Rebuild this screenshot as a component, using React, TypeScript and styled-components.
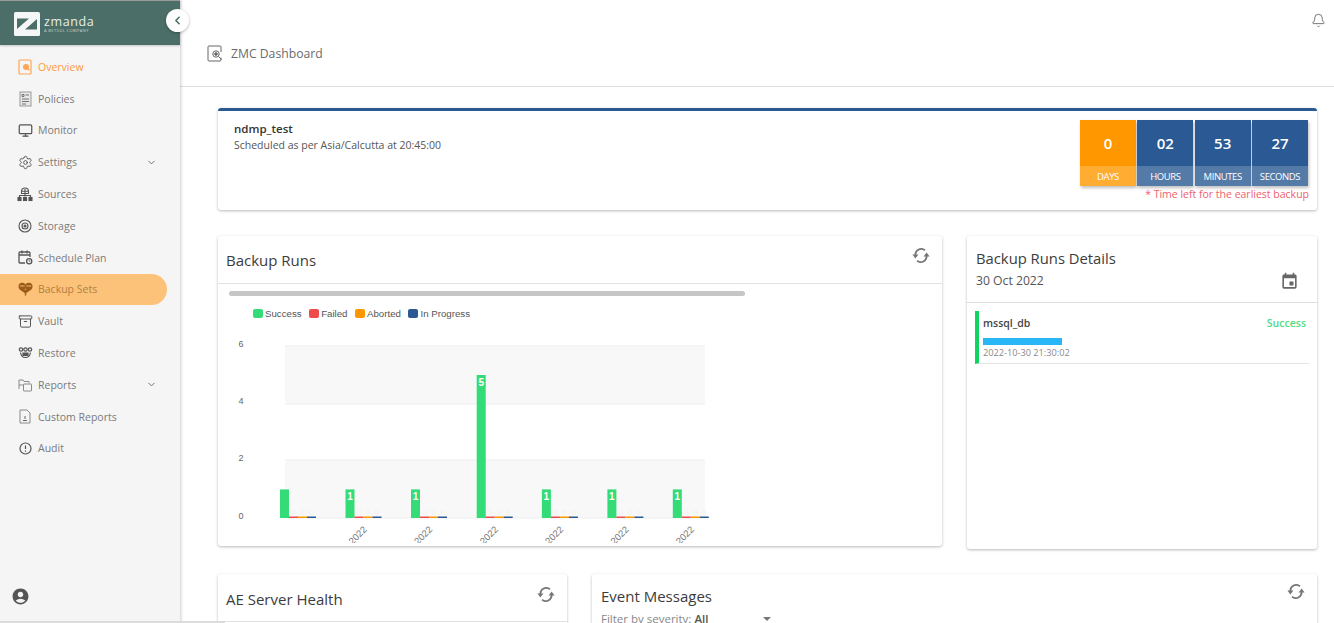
import type { ReactNode } from "react";
import styled, { createGlobalStyle } from "styled-components";
import { Archive, Bell, ChevronDown, ChevronLeft, Monitor, Settings } from "lucide-react";
import { MdAccountCircle, MdEvent } from "react-icons/md";

const palette = {
  orange: "#ff9800",
  blue: "#2a5993",
  green: "#33dc77",
  red: "#ef4b4b",
  sidebar: "#f5f5f5",
  teal: "#4b6f68",
};

const GlobalStyle = createGlobalStyle`
  html, body {
    margin: 0;
    height: 100%;
    overflow: hidden;
    background: #fff;
    font-family: "Open Sans", "Noto Sans", "Liberation Sans", sans-serif;
  }
  #root { height: 100%; }
  * { box-sizing: border-box; }
`;

function OverviewIcon() {
  return (
    <svg width="14" height="16" viewBox="0 0 14 16" fill="none" stroke="currentColor" strokeWidth="1.2" opacity="0.85">
      <rect x="1" y="1" width="12" height="14" rx="1" />
      <circle cx="8" cy="8" r="2.4" fill="currentColor" />
      <path d="M9.5 9.5l2 2" />
    </svg>
  );
}

function PoliciesIcon() {
  return (
    <svg width="13" height="16" viewBox="0 0 13 16" fill="#e8e8e8" stroke="#9a9a9a" strokeWidth="1">
      <rect x="1" y="1" width="11" height="14" />
      <path d="M3 3.5h2v2H3zM6.5 4h3.5M3 8h7M3 10.5h7M3 13h4" fill="none" stroke="#666" strokeWidth="0.9" />
    </svg>
  );
}

function SourcesIcon() {
  return (
    <svg width="16" height="16" viewBox="0 0 16 16" fill="none" stroke="currentColor" strokeWidth="1.1">
      <path d="M4.5 5.5a3.5 3.5 0 0 1 7 0v2h-7z" />
      <path d="M8 7.5v3M2.5 11V9.5h11V11M8 3v4.5M4.5 5.2h7" />
      <rect x="1" y="11.5" width="3" height="3" fill="currentColor" />
      <rect x="6.5" y="11.5" width="3" height="3" fill="currentColor" />
      <rect x="12" y="11.5" width="3" height="3" fill="currentColor" />
    </svg>
  );
}

function StorageIcon() {
  return (
    <svg width="14" height="14" viewBox="0 0 14 14" fill="none" stroke="currentColor" strokeWidth="1.1">
      <circle cx="7" cy="7" r="6" />
      <circle cx="7" cy="7" r="3" />
      <circle cx="7" cy="7" r="1" fill="currentColor" />
    </svg>
  );
}

function ScheduleIcon() {
  return (
    <svg width="15" height="15" viewBox="0 0 15 15" fill="none" stroke="currentColor" strokeWidth="1.3">
      <path d="M7 13H2a1 1 0 0 1-1-1V3a1 1 0 0 1 1-1h9a1 1 0 0 1 1 1v4" />
      <path d="M1 5h11M4 .5v3M9 .5v3" />
      <circle cx="11.2" cy="11.2" r="2.6" />
      <path d="M11.2 9.8v1.5h1.2" strokeWidth="0.8" />
    </svg>
  );
}

function BackupSetsIcon() {
  return (
    <svg width="15" height="14" viewBox="0 0 15 14" fill="currentColor">
      <circle cx="4.2" cy="4.5" r="3.7" />
      <circle cx="10.8" cy="4.5" r="3.7" />
      <path d="M1.5 7.5L7.5 11.5L13.5 7.5z" />
      <rect x="6.8" y="10" width="1.4" height="3.5" />
      <path d="M1.8 4h4.8M8.4 4h4.8" stroke="#fcc27a" strokeWidth="0.9" fill="none" />
    </svg>
  );
}

function RestoreIcon() {
  return (
    <svg width="15" height="12" viewBox="0 0 15 12" fill="none" stroke="currentColor" strokeWidth="1.2">
      <circle cx="3" cy="2.5" r="1.7" />
      <circle cx="7.5" cy="2.5" r="1.7" />
      <circle cx="12" cy="2.5" r="1.7" />
      <path d="M2.5 5.5c.5 3 2.5 5 5 5s4.5-2 5-5" />
      <path d="M5 6h5v2.5H5z" fill="currentColor" />
    </svg>
  );
}

function ReportsIcon() {
  return (
    <svg width="15" height="14" viewBox="0 0 15 14" fill="none" stroke="#8a8a8a" strokeWidth="1">
      <path d="M1 11V2h4l1 1.5h5V5" />
      <rect x="5.5" y="6" width="8" height="7" rx="0.5" />
      <path d="M1 7h4.5" />
    </svg>
  );
}

function CustomReportsIcon() {
  return (
    <svg width="12" height="15" viewBox="0 0 12 15" fill="none" stroke="#8a8a8a" strokeWidth="1">
      <path d="M1 1h7l3 3v10H1z" />
      <path d="M6 7v3M4 11.5h4" stroke="#666" />
    </svg>
  );
}

function AuditIcon() {
  return (
    <svg width="13" height="13" viewBox="0 0 13 13" fill="none" stroke="currentColor" strokeWidth="1.2">
      <circle cx="6.5" cy="6.5" r="5.5" />
      <path d="M6.5 3.5v3.5M6.5 8.5v1.2" />
    </svg>
  );
}

function DashboardIcon() {
  return (
    <svg width="16" height="17" viewBox="0 0 16 17" fill="none" stroke="#666" strokeWidth="1">
      <path d="M14 12.5V15a1 1 0 0 1-1 1H2a1 1 0 0 1-1-1V2a1 1 0 0 1 1-1h11a1 1 0 0 1 1 1v5" />
      <circle cx="9" cy="9" r="3.2" />
      <circle cx="9" cy="9" r="1.3" fill="#666" />
      <path d="M11.5 11.5l3 3" />
    </svg>
  );
}

function RefreshIcon() {
  return (
    <svg width="18" height="15" viewBox="0 0 18 15" fill="none" stroke="#777" strokeWidth="1.8">
      <path d="M13 2.4A5.8 5.8 0 0 0 3.4 7" />
      <path d="M5 12.6A5.8 5.8 0 0 0 14.6 8" />
      <path d="M0.4 6.6h6L3.4 10.4zM11.6 8.4h6L14.6 4.6z" fill="#777" stroke="none" />
    </svg>
  );
}

type NavEntry = { label: string; icon: ReactNode; tone?: "active" | "selected"; expandable?: boolean };

const navEntries: NavEntry[] = [
  { label: "Overview", icon: <OverviewIcon />, tone: "active" },
  { label: "Policies", icon: <PoliciesIcon /> },
  { label: "Monitor", icon: <Monitor size={15} strokeWidth={2} /> },
  { label: "Settings", icon: <Settings size={15} strokeWidth={1.5} />, expandable: true },
  { label: "Sources", icon: <SourcesIcon /> },
  { label: "Storage", icon: <StorageIcon /> },
  { label: "Schedule Plan", icon: <ScheduleIcon /> },
  { label: "Backup Sets", icon: <BackupSetsIcon />, tone: "selected" },
  { label: "Vault", icon: <Archive size={15} strokeWidth={1.6} /> },
  { label: "Restore", icon: <RestoreIcon /> },
  { label: "Reports", icon: <ReportsIcon />, expandable: true },
  { label: "Custom Reports", icon: <CustomReportsIcon /> },
  { label: "Audit", icon: <AuditIcon /> },
];

const countdown = [
  { value: "0", unit: "DAYS", color: palette.orange },
  { value: "02", unit: "HOURS", color: palette.blue },
  { value: "53", unit: "MINUTES", color: palette.blue },
  { value: "27", unit: "SECONDS", color: palette.blue },
];

const legend = [
  { label: "Success", color: palette.green },
  { label: "Failed", color: palette.red },
  { label: "Aborted", color: palette.orange },
  { label: "In Progress", color: palette.blue },
];

const runs = [
  { x: 280, count: 1, showLabels: false },
  { x: 345.5, count: 1, showLabels: true },
  { x: 411, count: 1, showLabels: true },
  { x: 476.7, count: 5, showLabels: true },
  { x: 541.9, count: 1, showLabels: true },
  { x: 607.4, count: 1, showLabels: true },
  { x: 672.8, count: 1, showLabels: true },
];

function RunsChart() {
  const base = 517;
  const unit = 28.6;
  return (
    <ChartSvg viewBox="218 325 724 217">
      <rect x="285" y="345" width="420" height="58" fill="#f8f8f8" />
      <rect x="285" y="459" width="420" height="58" fill="#f8f8f8" />
      {[345, 403, 459, 517].map((y) => (
        <line key={y} x1="285" x2="705" y1={y} y2={y} stroke="#efefef" />
      ))}
      {[
        ["6", 346],
        ["4", 403],
        ["2", 460],
        ["0", 518],
      ].map(([t, y]) => (
        <AxisText key={t} x="241" y={y} textAnchor="middle">
          {t}
        </AxisText>
      ))}
      {runs.map((run) => (
        <g key={run.x}>
          <rect x={run.x} y={base - run.count * unit} width="9" height={run.count * unit} fill={palette.green} />
          <rect x={run.x + 9} y={base - 1.5} width="9" height="1.5" fill={palette.red} />
          <rect x={run.x + 18} y={base - 1.5} width="9" height="1.5" fill={palette.orange} />
          <rect x={run.x + 27} y={base - 1.5} width="9" height="1.5" fill={palette.blue} />
          {[13.5, 22.5, 31.5].map((dx) => (
            <ZeroText key={dx} x={run.x + dx} y={base - 3} textAnchor="middle">
              0
            </ZeroText>
          ))}
          {run.showLabels && (
            <BarText x={run.x + 4.5} y={base - run.count * unit + 11} textAnchor="middle">
              {run.count}
            </BarText>
          )}
          {run.showLabels && (
            <DateText x={run.x + 22} y={529} textAnchor="end" transform={`rotate(-45 ${run.x + 22} 529)`}>
              30-Oct-2022
            </DateText>
          )}
        </g>
      ))}
    </ChartSvg>
  );
}

export default function App() {
  return (
    <Page>
      <GlobalStyle />
      <Sidebar>
        <Brand>
          <BrandMark viewBox="0 0 26 24">
            <rect width="26" height="24" rx="1.5" fill="#f4f7f6" />
            <path d="M3 6.500h12L3 17zM23 7v10.500H11z" fill={palette.teal} />
          </BrandMark>
          <BrandText>
            <BrandName>zmanda</BrandName>
            <BrandTag>A BETSOL COMPANY</BrandTag>
          </BrandText>
        </Brand>
        <CollapseButton>
          <ChevronLeft size={13} strokeWidth={3} />
        </CollapseButton>
        <Nav>
          {navEntries.map((entry) => (
            <NavItem key={entry.label} $tone={entry.tone}>
              <NavIcon>{entry.icon}</NavIcon>
              <span>{entry.label}</span>
              {entry.expandable && (
                <NavCaret>
                  <ChevronDown size={11} strokeWidth={2} />
                </NavCaret>
              )}
            </NavItem>
          ))}
        </Nav>
        <UserSlot>
          <MdAccountCircle size={19} />
        </UserSlot>
      </Sidebar>
      <Main>
        <TopBar>
          <BellSlot>
            <Bell size={15} strokeWidth={1.4} />
          </BellSlot>
          <PageTitle>
            <DashboardIcon />
            <span>ZMC Dashboard</span>
          </PageTitle>
        </TopBar>
        <Content>
          <NextBackupCard>
            <div>
              <PolicyName>ndmp_test</PolicyName>
              <PolicySchedule>Scheduled as per Asia/Calcutta at 20:45:00</PolicySchedule>
            </div>
            <CountdownColumn>
              <CountdownRow>
                {countdown.map((c) => (
                  <CountdownBox key={c.unit} $color={c.color}>
                    <CountdownValue>{c.value}</CountdownValue>
                    <CountdownUnit>{c.unit}</CountdownUnit>
                  </CountdownBox>
                ))}
              </CountdownRow>
              <CountdownNote>* Time left for the earliest backup</CountdownNote>
            </CountdownColumn>
          </NextBackupCard>

          <ChartRow>
            <RunsCard>
              <RunsHeader>
                <CardTitle>Backup Runs</CardTitle>
                <RefreshSlot>
                  <RefreshIcon />
                </RefreshSlot>
              </RunsHeader>
              <ScrollThumb />
              <Legend>
                {legend.map((item) => (
                  <LegendItem key={item.label}>
                    <LegendSwatch $color={item.color} />
                    {item.label}
                  </LegendItem>
                ))}
              </Legend>
              <RunsChart />
            </RunsCard>
            <DetailsCard>
              <DetailsHeader>
                <DetailsTitle>Backup Runs Details</DetailsTitle>
                <DateRow>
                  <span>30 Oct 2022</span>
                  <MdEvent size={19} color="#666" />
                </DateRow>
              </DetailsHeader>
              <RunItem>
                <RunTop>
                  <RunName>mssql_db</RunName>
                  <RunStatus>Success</RunStatus>
                </RunTop>
                <RunProgress />
                <RunTime>2022-10-30 21:30:02</RunTime>
              </RunItem>
            </DetailsCard>
          </ChartRow>

          <BottomRow>
            <HealthCard>
              <HealthHeader>
                <CardTitle>AE Server Health</CardTitle>
                <RefreshSlot>
                  <RefreshIcon />
                </RefreshSlot>
              </HealthHeader>
            </HealthCard>
            <EventsCard>
              <EventsHeader>
                <EventsText>
                  <CardTitle>Event Messages</CardTitle>
                  <FilterRow>
                    Filter by severity: <b>All</b>
                    <FilterCaret />
                  </FilterRow>
                </EventsText>
                <RefreshSlot>
                  <RefreshIcon />
                </RefreshSlot>
              </EventsHeader>
            </EventsCard>
          </BottomRow>
        </Content>
      </Main>
      <PageScrollbar />
    </Page>
  );
}

const Page = styled.div`
  display: flex;
  height: 100%;
  position: relative;
  overflow: hidden;
`;

const Sidebar = styled.aside`
  position: relative;
  z-index: 2;
  display: flex;
  flex-direction: column;
  flex: 0 0 180px;
  background: ${palette.sidebar};
  box-shadow: 1px 0 3px rgba(0, 0, 0, 0.2);
`;

const Brand = styled.div`
  display: flex;
  align-items: center;
  gap: 4px;
  height: 45px;
  padding: 1px 0 0 14px;
  background: ${palette.teal};
  border-top: 1px solid #9a9a9a;
  box-shadow: 0 1px 2px rgba(0, 0, 0, 0.2);
`;

const BrandMark = styled.svg`
  width: 26px;
  height: 24px;
`;

const BrandText = styled.div`
  display: flex;
  flex-direction: column;
  padding-top: 2px;
  color: #e6eeeb;
`;

const BrandName = styled.span`
  font-size: 12.5px;
  line-height: 13px;
  letter-spacing: 0.6px;
`;

const BrandTag = styled.span`
  font-size: 4px;
  line-height: 6px;
  letter-spacing: 0.4px;
  color: #c4d3ce;
`;

const CollapseButton = styled.div`
  position: absolute;
  top: 9px;
  left: 166px;
  display: flex;
  align-items: center;
  justify-content: center;
  width: 23px;
  height: 23px;
  border-radius: 50%;
  color: #4b6f68;
  background: #fff;
  box-shadow: 0 1px 3px rgba(0, 0, 0, 0.3);
`;

const Nav = styled.nav`
  display: flex;
  flex-direction: column;
  padding-top: 6px;
`;

const NavItem = styled.div<{ $tone?: "active" | "selected" }>`
  display: flex;
  align-items: center;
  height: 31.8px;
  margin-right: 13px;
  padding-left: 17px;
  font-size: 10.5px;
  color: ${(p) => (p.$tone === "active" ? "#ff9a3d" : p.$tone === "selected" ? "#b17f40" : "#7a7a7a")};
  background: ${(p) => (p.$tone === "selected" ? "#fcc27a" : "transparent")};
  border-radius: 0 16px 16px 0;
`;

const NavIcon = styled.span`
  display: flex;
  align-items: center;
  justify-content: center;
  width: 16px;
  margin-right: 5px;
  color: #555;

  ${NavItem}:nth-child(1) & {
    color: #ff9a3d;
  }
  ${NavItem}:nth-child(8) & {
    color: #9a5c18;
  }
`;

const NavCaret = styled.span`
  display: flex;
  margin-left: auto;
  margin-right: 10px;
  color: #666;
`;

const UserSlot = styled.div`
  position: absolute;
  top: 587px;
  left: 11px;
  display: flex;
  color: #555;
`;

const Main = styled.main`
  display: flex;
  flex-direction: column;
  flex: 1;
  min-width: 0;
`;

const TopBar = styled.header`
  position: relative;
  flex: 0 0 87px;
  padding: 45px 0 0 27px;
  border-bottom: 1px solid #dedede;
`;

const BellSlot = styled.div`
  position: absolute;
  top: 13px;
  right: 8px;
  display: flex;
  color: #666;
`;

const PageTitle = styled.div`
  display: flex;
  align-items: center;
  gap: 8px;
  font-size: 12.2px;
  color: #6b6b6b;
`;

const Content = styled.div`
  display: flex;
  flex-direction: column;
  padding: 21px 17px 0 38px;
`;

const Card = styled.section`
  background: #fff;
  border-radius: 3px;
  box-shadow: 0 1px 3px rgba(0, 0, 0, 0.28);
`;

const NextBackupCard = styled(Card)`
  display: flex;
  justify-content: space-between;
  height: 102px;
  padding: 9px 8px 0 16px;
  border-top: 3px solid ${palette.blue};
`;

const PolicyName = styled.div`
  font-size: 11.5px;
  line-height: 16px;
  font-weight: 600;
  color: #333;
  margin-top: 1px;
`;

const PolicySchedule = styled.div`
  font-size: 10.5px;
  line-height: 16px;
  color: #555;
`;

const CountdownColumn = styled.div`
  display: flex;
  flex-direction: column;
  align-items: flex-end;
`;

const CountdownRow = styled.div`
  display: flex;
  gap: 1.33px;
  margin-right: 1px;
`;

const CountdownBox = styled.div<{ $color: string }>`
  display: flex;
  flex-direction: column;
  width: 56px;
  height: 66px;
  color: #fff;
  background: ${(p) => p.$color};
  box-shadow: 1px 2px 3px rgba(0, 0, 0, 0.25);
`;

const CountdownValue = styled.div`
  display: flex;
  align-items: center;
  justify-content: center;
  flex: 0 0 46px;
  font-size: 15px;
  font-weight: 600;
`;

const CountdownUnit = styled.div`
  display: flex;
  align-items: center;
  justify-content: center;
  flex: 1;
  font-size: 9.5px;
  letter-spacing: -0.4px;
  background: rgba(255, 255, 255, 0.2);
`;

const CountdownNote = styled.div`
  margin-top: 1px;
  font-size: 10.5px;
  line-height: 14px;
  color: #f0606e;
`;

const ChartRow = styled.div`
  display: flex;
  align-items: flex-start;
  gap: 25px;
  height: 313px;
  margin-top: 26px;
`;

const RunsCard = styled(Card)`
  display: flex;
  flex-direction: column;
  flex: 0 0 724px;
  height: 310px;
  overflow: hidden;
`;

const RunsHeader = styled.div`
  display: flex;
  justify-content: space-between;
  align-items: flex-start;
  height: 48px;
  padding: 14px 12px 0 8px;
  border-bottom: 1px solid #e2e2e2;
`;

const CardTitle = styled.h2`
  margin: 0;
  font-size: 15px;
  line-height: 20px;
  font-weight: 400;
  color: #3c3c3c;
`;

const RefreshSlot = styled.div`
  display: flex;
  margin-top: -2px;
`;

const ScrollThumb = styled.div`
  width: 516px;
  height: 5px;
  margin: 7px 0 0 11px;
  border-radius: 3px;
  background: #c6c6c6;
`;

const Legend = styled.div`
  display: flex;
  height: 24px;
  margin-top: 5px;
  padding-left: 35px;
  align-items: center;
  gap: 7.5px;
  font-family: "Liberation Sans", Arial, sans-serif;
  font-size: 9.7px;
  color: #555;
`;

const LegendItem = styled.div`
  display: flex;
  align-items: center;
  gap: 2px;
`;

const LegendSwatch = styled.span<{ $color: string }>`
  width: 10px;
  height: 9px;
  border-radius: 2px;
  background: ${(p) => p.$color};
`;

const ChartSvg = styled.svg`
  display: block;
  width: 724px;
  height: 217px;
  margin-top: 1px;
  font-family: "Liberation Sans", Arial, sans-serif;
`;

const AxisText = styled.text`
  font-size: 9px;
  fill: #666;
`;

const ZeroText = styled.text`
  font-size: 8px;
  font-weight: 700;
  fill: #f4f4f4;
`;

const BarText = styled.text`
  font-size: 10px;
  font-weight: 700;
  fill: #fff;
`;

const DateText = styled.text`
  font-size: 9.5px;
  fill: #777;
`;

const DetailsCard = styled(Card)`
  flex: 1;
  height: 313px;
`;

const DetailsHeader = styled.div`
  height: 67px;
  padding: 12px 18px 0 9px;
  border-bottom: 1px solid #dedede;
`;

const DetailsTitle = styled.h2`
  margin: 0;
  font-size: 14.8px;
  line-height: 20px;
  font-weight: 400;
  color: #3c3c3c;
`;

const DateRow = styled.div`
  display: flex;
  justify-content: space-between;
  align-items: center;
  margin-top: 3px;
  font-size: 12.2px;
  line-height: 20px;
  color: #555;
`;

const RunItem = styled.div`
  height: 53px;
  margin: 8px 8px 0 8px;
  padding: 4px 3px 0 4px;
  border-left: 4px solid #10d45f;
  border-bottom: 1px solid #e4e4e4;
`;

const RunTop = styled.div`
  display: flex;
  justify-content: space-between;
  align-items: center;
  height: 16px;
`;

const RunName = styled.span`
  font-size: 10.5px;
  font-weight: 600;
  color: #444;
`;

const RunStatus = styled.span`
  font-size: 10.5px;
  font-weight: 600;
  color: #4fdc86;
`;

const RunProgress = styled.div`
  width: 79px;
  height: 7px;
  margin-top: 7px;
  background: #29b6f6;
`;

const RunTime = styled.div`
  margin-top: 1px;
  font-size: 9.2px;
  line-height: 13px;
  color: #8a8a8a;
`;

const BottomRow = styled.div`
  display: flex;
  gap: 25px;
  margin-top: 25px;
`;

const HealthCard = styled(Card)`
  flex: 0 0 349px;
  height: 120px;
`;

const HealthHeader = styled.div`
  display: flex;
  justify-content: space-between;
  align-items: flex-start;
  height: 48px;
  padding: 15px 12px 0 8px;
  border-bottom: 1px solid #e2e2e2;
`;

const EventsCard = styled(Card)`
  flex: 1;
  height: 120px;
`;

const EventsHeader = styled.div`
  display: flex;
  justify-content: space-between;
  align-items: flex-start;
  padding: 12px 12px 0 9px;
`;

const EventsText = styled.div`
  display: flex;
  flex-direction: column;
`;

const FilterRow = styled.div`
  display: flex;
  align-items: center;
  gap: 3px;
  margin-top: 5px;
  font-size: 11.5px;
  line-height: 16px;
  color: #888;

  b {
    font-weight: 600;
    color: #555;
  }
`;

const FilterCaret = styled.span`
  width: 0;
  height: 0;
  margin-left: 52px;
  border-left: 4px solid transparent;
  border-right: 4px solid transparent;
  border-top: 4px solid #777;
`;

const PageScrollbar = styled.div`
  position: absolute;
  left: 0;
  bottom: 0;
  z-index: 3;
  width: 225px;
  height: 2px;
  background: #dcdcdc;
`;
